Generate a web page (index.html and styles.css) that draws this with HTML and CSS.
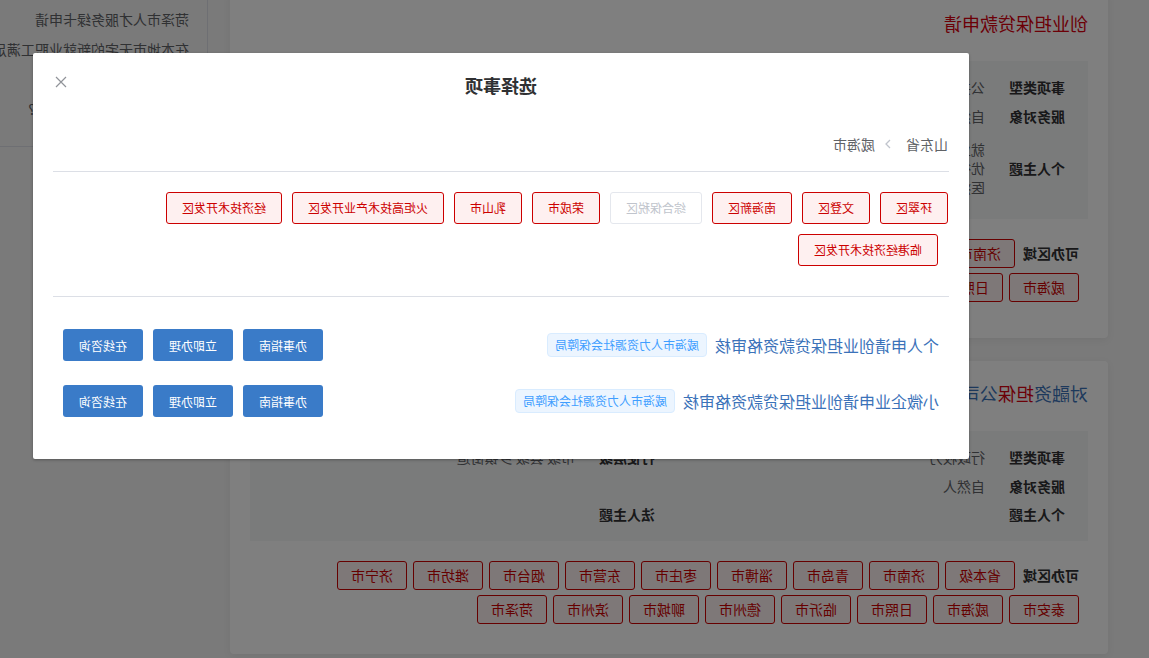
FILE: index.html
```html
<!DOCTYPE html>

<html lang="zh-CN">

    <head>
        <meta charset="utf-8" />
        <meta http-equiv="X-UA-Compatible" content="IE=edge" />
        <meta name="viewport" content="width=device-width, initial-scale=1.0" />
        <title>选择事项</title>

        <link rel="stylesheet" href="styles.css">
    </head>

    <body>
        <div id="pagina">
            <main id="resultados">
                <section class="card">
                    <h2 class="card_title card_title--hot">创业担保贷款申请</h2>

                    <div class="info">
                        <span class="info_label">事项类型</span>
                        <span class="info_value">公共服务</span>
                        <span class="info_label">行使层级</span>
                        <span class="info_value">市级 县级</span>

                        <span class="info_label">服务对象</span>
                        <span class="info_value">自然人</span>
                        <span class="info_label"></span>
                        <span class="info_value"></span>

                        <span class="info_label">个人主题</span>
                        <span class="info_value info_value--multi">就业创业<br>优待抚恤<br>医疗卫生</span>
                        <span class="info_label">法人主题</span>
                        <span class="info_value"></span>
                    </div>

                    <div class="areas">
                        <span class="areas_label">可办区域</span>
                        <span class="area">济南市</span>
                        <span class="area">青岛市</span>
                        <span class="area">淄博市</span>
                        <span class="area">枣庄市</span>
                        <span class="area">东营市</span>
                        <span class="area">烟台市</span>
                        <span class="area">潍坊市</span>
                        <span class="area">济宁市</span>
                        <span class="area">泰安市</span>
                        <span class="area">威海市</span>
                        <span class="area">日照市</span>
                        <span class="area">临沂市</span>
                        <span class="area">德州市</span>
                        <span class="area">聊城市</span>
                        <span class="area">滨州市</span>
                        <span class="area">菏泽市</span>
                    </div>
                </section>

                <section class="card">
                    <h2 class="card_title">对融资<span class="hl">担保</span>公司代偿损失补偿申请</h2>

                    <div class="info">
                        <span class="info_label">事项类型</span>
                        <span class="info_value">行政权力</span>
                        <span class="info_label">行使层级</span>
                        <span class="info_value">市级 县级 乡镇街道</span>

                        <span class="info_label">服务对象</span>
                        <span class="info_value">自然人</span>
                        <span class="info_label"></span>
                        <span class="info_value"></span>

                        <span class="info_label">个人主题</span>
                        <span class="info_value"></span>
                        <span class="info_label">法人主题</span>
                        <span class="info_value"></span>
                    </div>

                    <div class="areas">
                        <span class="areas_label">可办区域</span>
                        <span class="area">省本级</span>
                        <span class="area">济南市</span>
                        <span class="area">青岛市</span>
                        <span class="area">淄博市</span>
                        <span class="area">枣庄市</span>
                        <span class="area">东营市</span>
                        <span class="area">烟台市</span>
                        <span class="area">潍坊市</span>
                        <span class="area">济宁市</span>
                        <span class="area">泰安市</span>
                        <span class="area">威海市</span>
                        <span class="area">日照市</span>
                        <span class="area">临沂市</span>
                        <span class="area">德州市</span>
                        <span class="area">聊城市</span>
                        <span class="area">滨州市</span>
                        <span class="area">菏泽市</span>
                    </div>
                </section>
            </main>

            <aside id="sugerencias">
                <p class="sugerencia">菏泽市人才服务绿卡申请</p>
                <p class="sugerencia">在本地市无宅的新就业职工满足条件可申请住房补贴</p>
                <p class="sugerencia">一次性创业补贴申领</p>
                <p class="sugerencia">申请创业担保贷款的条件?</p>
            </aside>

            <div class="mascara"></div>

            <div class="dialogo">
                <header class="dialogo_header">
                    <h3 class="dialogo_titulo">选择事项</h3>
                    <button class="dialogo_cerrar" title="关闭">
                        <svg width="12" height="12" viewBox="0 0 12 12">
                            <path d="M1 1 L11 11 M11 1 L1 11" stroke="#909399" stroke-width="1.2" fill="none" />
                        </svg>
                    </button>
                </header>

                <div class="dialogo_body">
                    <nav class="migas">
                        <span>山东省</span>
                        <svg class="migas_sep" width="6" height="10" viewBox="0 0 6 10">
                            <polyline points="1,1 5,5 1,9" stroke="#c0c4cc" stroke-width="1.3" fill="none" />
                        </svg>
                        <span>威海市</span>
                    </nav>

                    <div class="divisor"></div>

                    <div class="zonas">
                        <span class="zona">环翠区</span>
                        <span class="zona">文登区</span>
                        <span class="zona">南海新区</span>
                        <span class="zona zona--off">综合保税区</span>
                        <span class="zona">荣成市</span>
                        <span class="zona">乳山市</span>
                        <span class="zona">火炬高技术产业开发区</span>
                        <span class="zona">经济技术开发区</span>
                        <span class="zona">临港经济技术开发区</span>
                    </div>

                    <div class="divisor divisor--lista"></div>

                    <ul class="tramites">
                        <li class="tramite">
                            <div class="tramite_info">
                                <span class="tramite_nombre">个人申请创业担保贷款资格审核</span>
                                <span class="tramite_dept">威海市人力资源社会保障局</span>
                            </div>
                            <div class="tramite_botones">
                                <button class="boton">办事指南</button>
                                <button class="boton">立即办理</button>
                                <button class="boton">在线咨询</button>
                            </div>
                        </li>
                        <li class="tramite">
                            <div class="tramite_info">
                                <span class="tramite_nombre">小微企业申请创业担保贷款资格审核</span>
                                <span class="tramite_dept">威海市人力资源社会保障局</span>
                            </div>
                            <div class="tramite_botones">
                                <button class="boton">办事指南</button>
                                <button class="boton">立即办理</button>
                                <button class="boton">在线咨询</button>
                            </div>
                        </li>
                    </ul>
                </div>
            </div>
        </div>
    </body>

</html>
```

FILE: styles.css
```css
* {
    padding: 0;
    margin: 0;
    box-sizing: border-box;
}

body {
    font-family: "Noto Sans CJK SC", "Noto Sans", sans-serif;
    font-size: 14px;
    color: #606266;
    background-color: #f4f4f4;
    overflow: hidden;
}

/* la captura sale en espejo */
#pagina {
    position: relative;
    display: flex;
    align-items: flex-start;
    width: 1149px;
    height: 658px;
    overflow: hidden;
    transform: scaleX(-1);
}

#resultados {
    display: flex;
    flex-direction: column;
    gap: 23px;
    flex: none;
    width: 878px;
    margin: -9px 0 0 41px;
}

.card {
    padding: 19px 20px 30px;
    background-color: #fff;
    border-radius: 4px;
    box-shadow: 0 2px 8px rgba(0, 0, 0, .06);
}

.card:first-child {
    padding-bottom: 36px;
}

.card_title {
    font-size: 18px;
    font-weight: normal;
    line-height: 26px;
    color: #3b72b9;
    white-space: nowrap;
}

.card_title--hot,
.hl {
    color: #d8000f;
}

.info {
    display: grid;
    grid-template-columns: 80px 330px 80px 1fr;
    align-items: center;
    margin-top: 25px;
    padding: 12px 23px;
    background-color: #f5f6f7;
}

.info_label {
    font-weight: bold;
    color: #303133;
    line-height: 28.5px;
    min-height: 28.5px;
}

.info_value {
    line-height: 28.5px;
    min-height: 28.5px;
    color: #606266;
}

.info_value--multi {
    padding: 10px 0;
    line-height: 19px;
}

.areas {
    display: flex;
    flex-wrap: wrap;
    align-items: center;
    gap: 5px 6px;
    margin: 20px 19px 0 9px;
}

.areas_label {
    margin-right: 2px;
    font-weight: bold;
    color: #303133;
    line-height: 29px;
}

.area {
    height: 29px;
    line-height: 27px;
    padding: 0 13px;
    color: #c00;
    background-color: #fdf0f0;
    border: 1px solid #c00;
    border-radius: 3px;
}

#sugerencias {
    flex: none;
    width: 208px;
    margin-left: 22px;
    padding: 4px 0 22px 18px;
    border-left: 1px solid #dcdfe6;
    border-bottom: 1px solid #dcdfe6;
    white-space: nowrap;
}

.sugerencia {
    line-height: 30px;
    color: #606266;
}

.mascara {
    position: absolute;
    top: 0;
    left: 0;
    right: 0;
    bottom: 0;
    background-color: rgba(0, 0, 0, .5);
}

.dialogo {
    position: absolute;
    top: 53px;
    left: 180px;
    width: 936px;
    background-color: #fff;
    border-radius: 2px;
    box-shadow: 0 1px 3px rgba(0, 0, 0, .3);
}

.dialogo_header {
    position: relative;
    padding: 20px 20px 10px;
}

.dialogo_titulo {
    font-size: 18px;
    line-height: 24px;
    text-align: center;
    color: #303133;
}

.dialogo_cerrar {
    position: absolute;
    top: 23px;
    right: 22px;
    display: flex;
    background: transparent;
    border: none;
    cursor: pointer;
}

.dialogo_body {
    padding: 30px 20px;
}

.migas {
    display: flex;
    align-items: center;
    line-height: 14px;
    padding-left: 1px;
    color: #606266;
}

.migas_sep {
    margin: 0 10px 0 15px;
}

.divisor {
    height: 1px;
    margin: 20px 0;
    background-color: #dcdfe6;
}

.divisor--lista {
    margin-top: 20px;
}

.zonas {
    display: flex;
    flex-wrap: wrap;
    padding-left: 1px;
}

.zona {
    height: 32px;
    line-height: 30px;
    margin-bottom: 10px;
    padding: 0 15px;
    font-size: 12px;
    color: #c00;
    background-color: #fef0f0;
    border: 1px solid #c00;
    border-radius: 3px;
}

.zona + .zona {
    margin-left: 10px;
}

.zona--off {
    color: #c0c4cc;
    background-color: #fff;
    border-color: #e4e7ed;
}

.tramites {
    list-style: none;
}

.tramite {
    display: flex;
    justify-content: space-between;
    align-items: center;
    padding: 12px 10px;
}

.tramite_info {
    display: flex;
    align-items: center;
    gap: 8px;
}

.tramite_nombre {
    font-size: 16px;
    line-height: 24px;
    color: #3b72b9;
}

.tramite_dept {
    height: 24px;
    line-height: 22px;
    padding: 0 7px;
    font-size: 12px;
    color: #409eff;
    background-color: #ecf5ff;
    border: 1px solid #d9ecff;
    border-radius: 4px;
}

.tramite_botones {
    display: flex;
    gap: 10px;
}

.boton {
    width: 80px;
    height: 32px;
    font-family: inherit;
    font-size: 12px;
    color: #fff;
    background-color: #3a7bc8;
    border: none;
    border-radius: 3px;
    cursor: pointer;
}
```
